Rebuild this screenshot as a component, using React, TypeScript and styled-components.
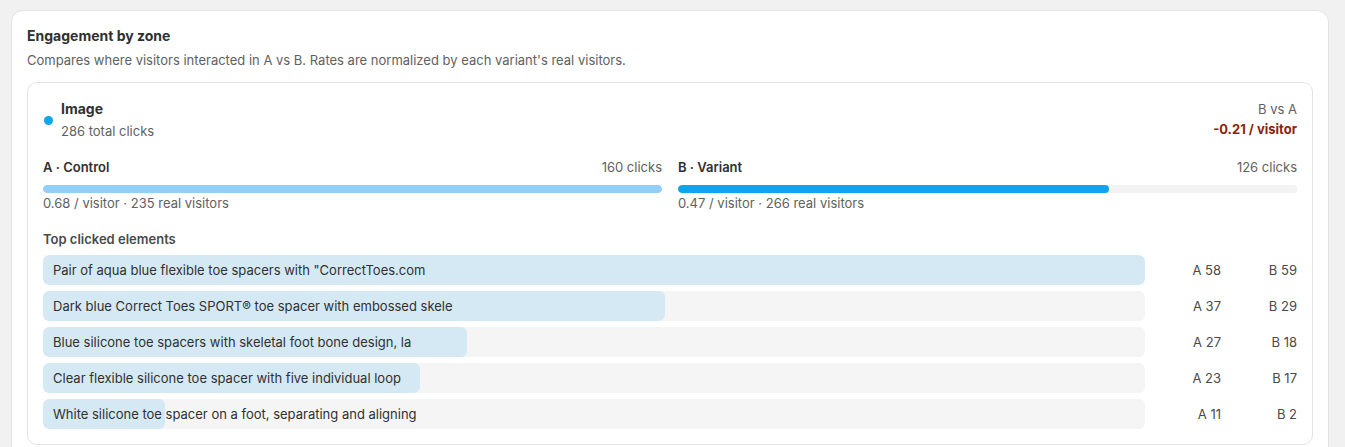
import { createGlobalStyle } from "styled-components";
import styled from "styled-components";

const GlobalStyle = createGlobalStyle`
  html, body {
    margin: 0;
    background: #f1f1f1;
    font-family: Inter, "Noto Sans", Arial, sans-serif;
    color: #303030;
    -webkit-font-smoothing: antialiased;
  }
`;

const Page = styled.div`
  padding: 10px 16px 0 11px;
`;

const Card = styled.section`
  background: #fff;
  border: 1px solid #e3e3e3;
  border-radius: 12px;
  padding: 15px 15px 16px;
`;

const Title = styled.h2`
  margin: 0;
  font-size: 14px;
  line-height: 20px;
  font-weight: 650;
  color: #303030;
`;

const Subtitle = styled.p`
  margin: 4px 0 0;
  font-size: 13px;
  line-height: 20px;
  color: #616161;
`;

const Zone = styled.div`
  margin-top: 12px;
  border: 1px solid #e3e3e3;
  border-radius: 10px;
  padding: 16px 15px 15px;
`;

const ZoneHeader = styled.div`
  display: flex;
  justify-content: space-between;
  align-items: flex-start;
`;

const ZoneName = styled.div`
  display: flex;
  align-items: center;
  gap: 8px;
`;

const Dot = styled.span`
  width: 9px;
  height: 9px;
  border-radius: 50%;
  background: #0ea5e9;
  flex: none;
  margin: 0 0 0 1px;
`;

const Strong = styled.div`
  font-size: 14px;
  line-height: 20px;
  font-weight: 650;
  color: #303030;
`;

const Muted = styled.div`
  margin-top: 2px;
  font-size: 13px;
  line-height: 20px;
  color: #616161;
`;

const Delta = styled.div`
  text-align: right;
`;

const DeltaLabel = styled.div`
  font-size: 13px;
  line-height: 20px;
  color: #616161;
`;

const DeltaValue = styled.div<{ $negative: boolean }>`
  font-size: 13px;
  line-height: 20px;
  font-weight: 700;
  color: ${({ $negative }) => ($negative ? "#8e1f0b" : "#0c5132")};
`;

const Variants = styled.div`
  display: grid;
  grid-template-columns: 1fr 1fr;
  gap: 16px;
  margin-top: 16px;
`;

const VariantHead = styled.div`
  display: flex;
  justify-content: space-between;
  align-items: center;
  line-height: 20px;
`;

const VariantName = styled.span`
  font-size: 13px;
  font-weight: 600;
  color: #303030;
`;

const Clicks = styled.span`
  font-size: 13px;
  color: #616161;
`;

const Track = styled.div`
  margin-top: 8px;
  height: 8px;
  border-radius: 4px;
  background: #f3f3f3;
  overflow: hidden;
`;

const Fill = styled.div<{ $color: string }>`
  height: 100%;
  border-radius: 4px;
  background: ${({ $color }) => $color};
`;

const Caption = styled.div`
  margin-top: 1px;
  font-size: 13px;
  line-height: 18px;
  color: #616161;
`;

const SectionLabel = styled.div`
  margin-top: 17px;
  font-size: 13px;
  line-height: 20px;
  font-weight: 600;
  color: #4a4a4a;
`;

const Rows = styled.div`
  margin-top: 6px;
  display: grid;
  gap: 6px;
`;

const Row = styled.div`
  display: grid;
  grid-template-columns: 1fr 64px 64px;
  gap: 12px;
  align-items: center;
`;

const RowBar = styled.div`
  position: relative;
  height: 30px;
  border-radius: 6px;
  background: #f5f5f5;
  overflow: hidden;
`;

const RowFill = styled.div`
  position: absolute;
  inset: 0 auto 0 0;
  background: #d5e9f5;
  border-radius: 6px;
`;

const RowText = styled.span`
  position: relative;
  display: block;
  padding: 0 10px;
  font-size: 13px;
  line-height: 30px;
  color: #303030;
  white-space: nowrap;
  overflow: hidden;
`;

const Count = styled.span`
  text-align: right;
  font-size: 13px;
  color: #4a4a4a;
`;

const variants = [
  { name: "A · Control", clicks: 160, visitors: 235, color: "#93cffb" },
  { name: "B · Variant", clicks: 126, visitors: 266, color: "#0ea5e9" },
];

const elements = [
  { label: 'Pair of aqua blue flexible toe spacers with "CorrectToes.com', a: 58, b: 59 },
  { label: "Dark blue Correct Toes SPORT® toe spacer with embossed skele", a: 37, b: 29 },
  { label: "Blue silicone toe spacers with skeletal foot bone design, la", a: 27, b: 18 },
  { label: "Clear flexible silicone toe spacer with five individual loop", a: 23, b: 17 },
  { label: "White silicone toe spacer on a foot, separating and aligning", a: 11, b: 2 },
];

export default function App() {
  const rates = variants.map((v) => v.clicks / v.visitors);
  const maxRate = Math.max(...rates);
  const maxTotal = Math.max(...elements.map((e) => e.a + e.b));
  const delta = rates[1] - rates[0];

  return (
    <Page>
      <GlobalStyle />
      <Card>
        <Title>Engagement by zone</Title>
        <Subtitle>Compares where visitors interacted in A vs B. Rates are normalized by each variant's real visitors.</Subtitle>

        <Zone>
          <ZoneHeader>
            <ZoneName>
              <Dot />
              <div>
                <Strong>Image</Strong>
                <Muted>286 total clicks</Muted>
              </div>
            </ZoneName>
            <Delta>
              <DeltaLabel>B vs A</DeltaLabel>
              <DeltaValue $negative={delta < 0}>{delta.toFixed(2)} / visitor</DeltaValue>
            </Delta>
          </ZoneHeader>

          <Variants>
            {variants.map((v, i) => (
              <div key={v.name}>
                <VariantHead>
                  <VariantName>{v.name}</VariantName>
                  <Clicks>{v.clicks} clicks</Clicks>
                </VariantHead>
                <Track>
                  <Fill $color={v.color} style={{ width: `${(rates[i] / maxRate) * 100}%` }} />
                </Track>
                <Caption>
                  {rates[i].toFixed(2)} / visitor · {v.visitors} real visitors
                </Caption>
              </div>
            ))}
          </Variants>

          <SectionLabel>Top clicked elements</SectionLabel>
          <Rows>
            {elements.map((e) => (
              <Row key={e.label}>
                <RowBar>
                  <RowFill style={{ width: `${((e.a + e.b) / maxTotal) * 100}%` }} />
                  <RowText>{e.label}</RowText>
                </RowBar>
                <Count>A {e.a}</Count>
                <Count>B {e.b}</Count>
              </Row>
            ))}
          </Rows>
        </Zone>
      </Card>
    </Page>
  );
}
